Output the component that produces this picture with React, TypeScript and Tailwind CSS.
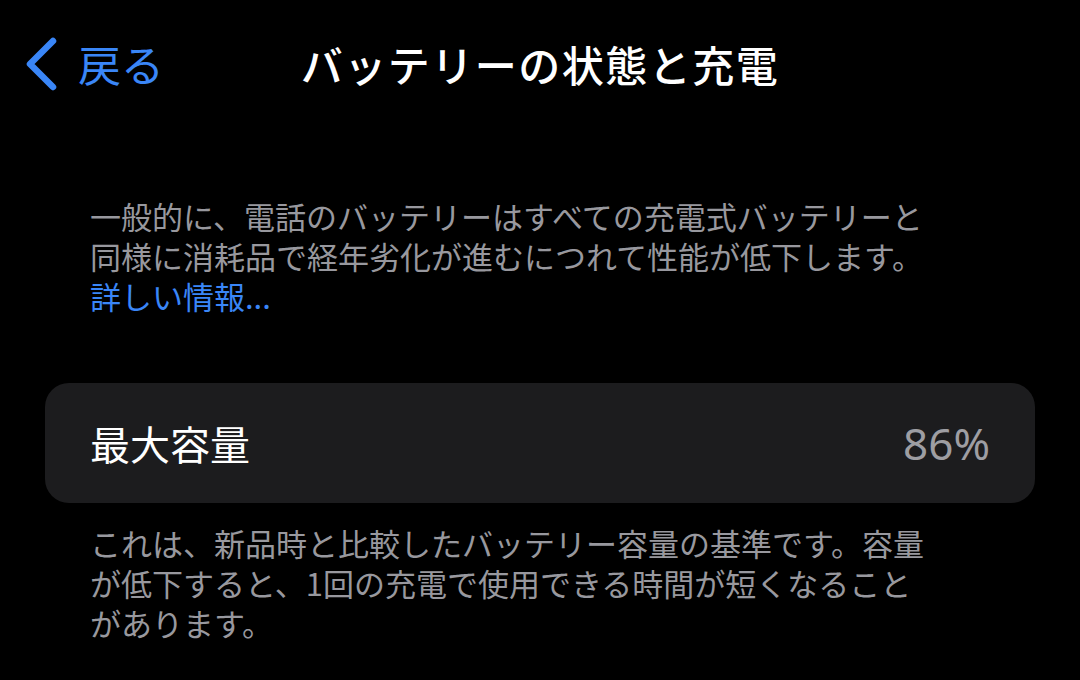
import React from "react";

const font = { fontFamily: '"Noto Sans CJK JP", "Noto Sans", sans-serif' };

export default function App() {
  return (
    <div
      className="w-[1080px] h-[680px] bg-black text-white overflow-hidden flex flex-col"
      style={font}
    >
      {/* Navigation bar */}
      <div className="relative h-[128px] flex items-center justify-center">
        <button className="absolute left-[24px] top-[36px] flex items-center gap-[18px] text-[#3a86f7]">
          <svg width="36" height="56" viewBox="0 0 36 56" fill="none">
            <polyline
              points="29,5 6,28 29,51"
              stroke="currentColor"
              strokeWidth="6.5"
              strokeLinecap="round"
              strokeLinejoin="round"
            />
          </svg>
          <span className="text-[43px] leading-none -mt-[2px]">戻る</span>
        </button>
        <h1 className="text-[42px] font-medium tracking-[1.5px] leading-none">
          バッテリーの状態と充電
        </h1>
      </div>

      {/* Intro */}
      <p className="mt-[68px] px-[90px] text-[31px] leading-[40px] text-[#98989e]">
        一般的に、電話のバッテリーはすべての充電式バッテリーと
        <br />
        同様に消耗品で経年劣化が進むにつれて性能が低下します。
        <br />
        <span className="text-[#3a86f7]">詳しい情報...</span>
      </p>

      {/* Maximum capacity card */}
      <div className="mt-[67px] mx-[45px] h-[120px] rounded-[24px] bg-[#1c1c1e] px-[45px] flex items-center justify-between">
        <span className="text-[40px] leading-none">最大容量</span>
        <span className="text-[44px] leading-none text-[#9e9ea3]" style={{ fontFamily: '"Noto Sans", sans-serif' }}>
          86%
        </span>
      </div>

      {/* Footer note */}
      <p className="mt-[20px] px-[90px] text-[31px] leading-[40px] text-[#98989e]">
        これは、新品時と比較したバッテリー容量の基準です。容量
        <br />
        が低下すると、1回の充電で使用できる時間が短くなること
        <br />
        があります。
      </p>
    </div>
  );
}
